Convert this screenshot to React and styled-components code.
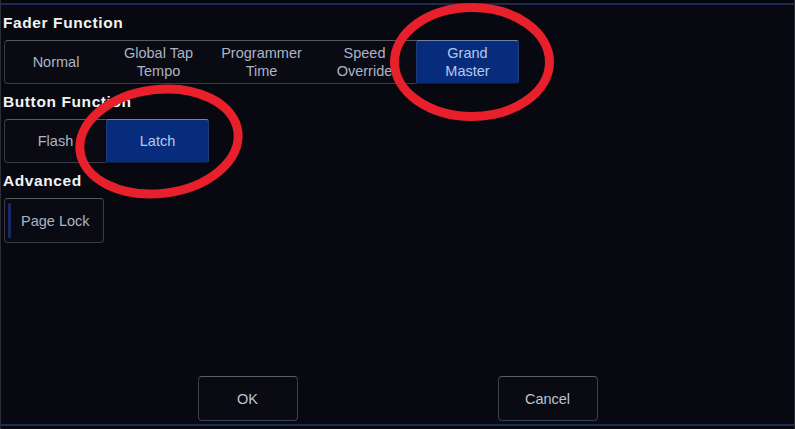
import React from 'react'
import styled, { createGlobalStyle } from 'styled-components'

const Global = createGlobalStyle`
  html, body { margin: 0; padding: 0; background: #080910; }
  * { box-sizing: border-box; }
`

const Frame = styled.div`
  position: relative;
  width: 795px;
  height: 429px;
  background: #080910;
  border-left: 1px solid #2a2c36;
  border-right: 1px solid #2a2c36;
  display: flex;
  flex-direction: column;
  font-family: "Liberation Sans", Arial, sans-serif;
  overflow: hidden;
`

const TitleStrip = styled.div`
  height: 5px;
  border-bottom: 2px solid #1b2a55;
  background: #06070c;
`

const Content = styled.div`
  padding: 0 3px;
  display: flex;
  flex-direction: column;
  align-items: flex-start;
`

const Heading = styled.div`
  height: 35px;
  display: flex;
  align-items: center;
  margin-left: -1px;
  color: #f2f3f6;
  font-weight: bold;
  font-size: 15.5px;
  letter-spacing: 0.6px;
`

const Group = styled.div`
  display: flex;
  height: 44px;
  border: 1px solid #3a3c45;
  border-top-color: #585a63;
  border-radius: 4px;
  background: #0a0b12;
`

const Segment = styled.div`
  width: ${p => p.$w || 103}px;
  display: flex;
  align-items: center;
  justify-content: center;
  text-align: center;
  font-size: 14.5px;
  line-height: 18px;
  color: ${p => (p.$on ? '#b4c8ec' : '#aab4c6')};
  ${p => p.$on && `
    background: #082c7c;
    margin: -1px -1px -1px 0;
    border: 1px solid #213a78;
    border-top-color: #7082aa;
    border-bottom-color: #0c1c46;
    border-radius: 3px;
    box-shadow: 0 1px 2px rgba(0,0,0,0.6);
  `}
`

const ToggleButton = styled.div`
  width: 100px;
  height: 45px;
  border: 1px solid #3a3c45;
  border-top-color: #585a63;
  border-radius: 4px;
  background: #0a0b12;
  display: flex;
  align-items: center;
  padding: 4px 3px;
  gap: 10px;
  color: #aab4c6;
  font-size: 14.5px;
`

const Indicator = styled.span`
  width: 3px;
  align-self: stretch;
  background: #1a2866;
  border-radius: 1px;
`

const Footer = styled.div`
  margin-top: auto;
  display: flex;
  justify-content: center;
  gap: 200px;
  padding-bottom: 3px;
  border-bottom: 2px solid #1b2d5a;
  margin-bottom: 3px;
`

const DialogButton = styled.div`
  width: 100px;
  height: 45px;
  border: 1px solid #3e4049;
  border-top-color: #5c5e66;
  border-radius: 4px;
  background: #0a0b12;
  display: flex;
  align-items: center;
  justify-content: center;
  color: #bcc3d0;
  font-size: 14.5px;
`

const Marks = styled.svg`
  position: absolute;
  left: -1px;
  top: 0;
  pointer-events: none;
`

export default function App() {
  return (
    <Frame>
      <Global />
      <TitleStrip />
      <Content>
        <Heading>Fader Function</Heading>
        <Group>
          <Segment $w={102}>Normal</Segment>
          <Segment>Global Tap<br />Tempo</Segment>
          <Segment>Programmer<br />Time</Segment>
          <Segment>Speed<br />Override</Segment>
          <Segment $on>Grand<br />Master</Segment>
        </Group>
        <Heading>Button Function</Heading>
        <Group>
          <Segment $w={101}>Flash</Segment>
          <Segment $on>Latch</Segment>
        </Group>
        <Heading>Advanced</Heading>
        <ToggleButton>
          <Indicator />
          Page Lock
        </ToggleButton>
      </Content>
      <Footer>
        <DialogButton>OK</DialogButton>
        <DialogButton>Cancel</DialogButton>
      </Footer>
      <Marks width="795" height="429" viewBox="0 0 795 429">
        <ellipse cx="472" cy="62" rx="77.5" ry="54.5" fill="none" stroke="#e8202b" strokeWidth="9" />
        <ellipse cx="159" cy="141.5" rx="79.5" ry="52" fill="none" stroke="#e8202b" strokeWidth="9" transform="rotate(-7 159 141.5)" />
      </Marks>
    </Frame>
  )
}
